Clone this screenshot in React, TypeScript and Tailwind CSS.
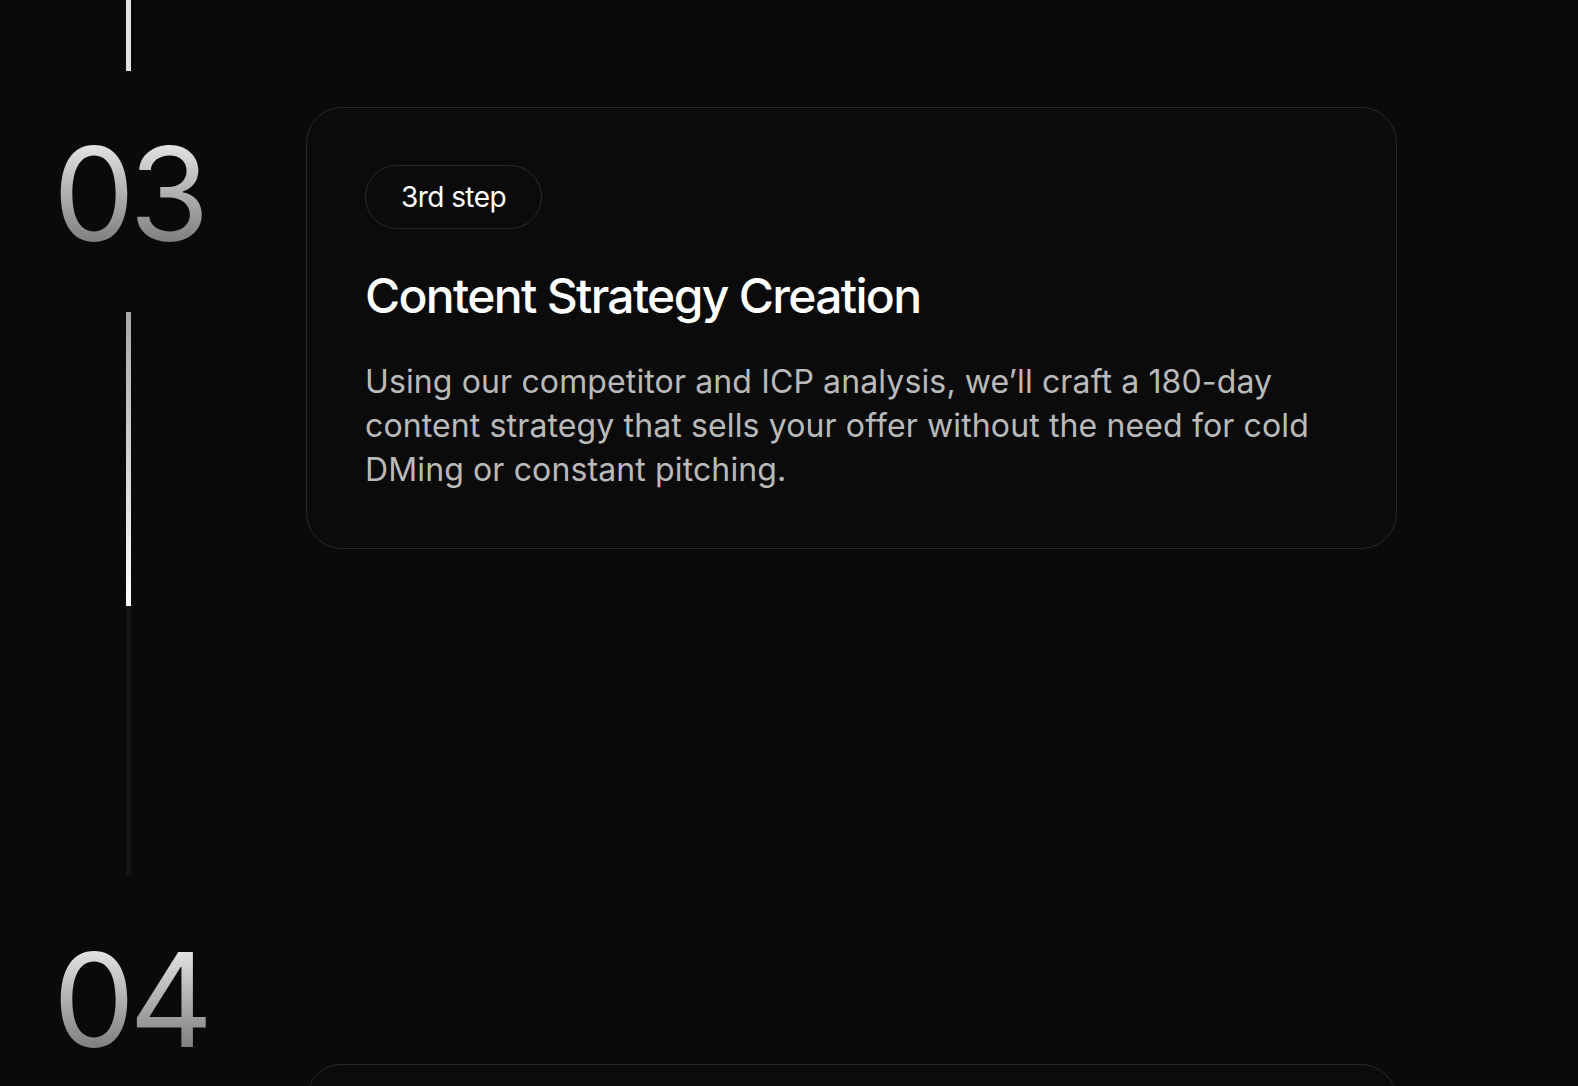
import React from "react"

const steps = [
  {
    badge: "3rd step",
    title: "Content Strategy Creation",
    body: "Using our competitor and ICP analysis, we’ll craft a 180-day content strategy that sells your offer without the need for cold DMing or constant pitching.",
  },
]

function StepNumber({ value }: { value: string }) {
  return (
    <div className="bg-linear-to-b from-[#f4f4f4] to-[#6f6f6f] bg-clip-text text-[130px] leading-[130px] tracking-[-0.045em] text-transparent">
      {value}
    </div>
  )
}

function StepCard({ badge, title, body }: { badge: string; title: string; body: string }) {
  return (
    <div className="w-[1091px] rounded-[36px] border border-[#2a2a2a] bg-[#0b0b0b] px-[58px] pt-[57px] pb-[56px]">
      <span className="inline-flex h-16 items-center rounded-full border border-[#2a2a2a] px-[35px] text-[28px] tracking-[-0.02em] text-white">
        {badge}
      </span>
      <h3 className="mt-[38px] text-[48px] leading-[1.2] font-medium tracking-[-0.035em] text-white">
        {title}
      </h3>
      <p className="mt-[35px] max-w-[960px] text-[32px] leading-[44px] tracking-[0.004em] text-[#bababa]">
        {body}
      </p>
    </div>
  )
}

export default function App() {
  return (
    <div
      className="flex h-[1086px] w-full overflow-hidden bg-[#0a0a0a]"
      style={{ fontFamily: "Inter, 'Noto Sans', sans-serif" }}
    >
      {/* timeline column */}
      <div className="flex w-[306px] shrink-0 flex-col pl-[53px]">
        <div className="ml-[73px] h-[71px] w-[5px] bg-[#e2e2e2]" />
        <div className="mt-[58px]">
          <StepNumber value="03" />
        </div>
        <div className="mt-[53px] ml-[73px] flex h-[563px] w-[5px] flex-col bg-[#161616]">
          <div className="h-[294px] w-full bg-linear-to-b from-[#a8a8a8] to-white" />
        </div>
        <div className="mt-[60px]">
          <StepNumber value="04" />
        </div>
      </div>

      {/* cards */}
      <div className="flex flex-col gap-[515px] pt-[107px]">
        {steps.map((s) => (
          <StepCard key={s.badge} {...s} />
        ))}
        <div className="h-[300px] w-[1091px] shrink-0 rounded-[36px] border border-[#2a2a2a] bg-[#0b0b0b]" />
      </div>
    </div>
  )
}
